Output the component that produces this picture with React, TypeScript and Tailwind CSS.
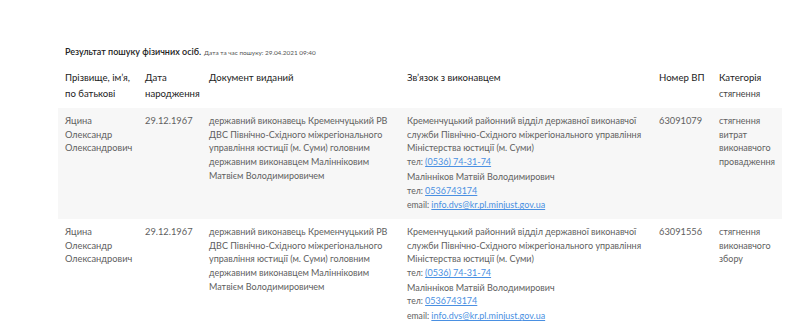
import React from "react";

const font = { fontFamily: "Lato, 'Noto Sans', sans-serif" };

type Row = {
  name: string[];
  date: string;
  doc: string[];
  cat: string[];
  num: string;
};

const docLines = [
  "державний виконавець Кременчуцький РВ",
  "ДВС Північно-Східного міжрегіонального",
  "управління юстиції (м. Суми) головним",
  "державним виконавцем Малінніковим",
  "Матвієм Володимировичем",
];

const rows: Row[] = [
  {
    name: ["Яцина", "Олександр", "Олександрович"],
    date: "29.12.1967",
    doc: docLines,
    num: "63091079",
    cat: ["стягнення", "витрат", "виконавчого", "провадження"],
  },
  {
    name: ["Яцина", "Олександр", "Олександрович"],
    date: "29.12.1967",
    doc: docLines,
    num: "63091556",
    cat: ["стягнення", "виконавчого", "збору"],
  },
];

function Lines({ lines }: { lines: string[] }) {
  return (
    <>
      {lines.map((l, i) => (
        <div key={i} className="whitespace-nowrap">
          {l}
        </div>
      ))}
    </>
  );
}

const cols = "grid grid-cols-[80px_64px_198px_252px_60px_1fr]";

export default function App() {
  return (
    <div className="w-[800px] h-[327px] bg-white overflow-hidden" style={font}>
      <div className="ml-[58px] w-[724px] pt-[45px]">
        <div className="px-[7px] h-[14px] leading-[14px] flex items-baseline whitespace-nowrap">
          <span className="text-[9px] font-semibold text-[#222]">Результат пошуку фізичних осіб.</span>
          <span className="ml-[3px] text-[6.4px] text-[#555]">Дата та час пошуку: 29.04.2021 09:40</span>
        </div>
        <div className={`${cols} px-[7px] mt-[11px] pb-[6px] text-[9.6px] leading-[16px] text-[#222]`}>
          <div>
            <div>Прізвище, ім’я,</div>
            <div>по батькові</div>
          </div>
          <div>
            <div>Дата</div>
            <div>народження</div>
          </div>
          <div>Документ виданий</div>
          <div>Зв’язок з виконавцем</div>
          <div>Номер ВП</div>
          <div>
            <div>Категорія</div>
            <div className="text-[9px] text-[#444]">стягнення</div>
          </div>
        </div>
        {rows.map((r, i) => (
          <div
            key={i}
            className={`${cols} px-[7px] py-[6px] text-[9px] leading-[13.7px] text-[#606060] ${
              i === 0 ? "bg-[#f7f7f7]" : ""
            }`}
          >
            <div className="text-[9.3px]">
              <Lines lines={r.name} />
            </div>
            <div className="text-[9.3px]">{r.date}</div>
            <div>
              <Lines lines={r.doc} />
            </div>
            <div>
              <Lines
                lines={[
                  "Кременчуцький районний відділ державної виконавчої",
                  "служби Північно-Східного міжрегіонального управління",
                  "Міністерства юстиції (м. Суми)",
                ]}
              />
              <div className="text-[8.6px] whitespace-nowrap">
                тел:{" "}
                <a href="#" className="text-[9px] text-[#4a90e2] underline">
                  (0536) 74-31-74
                </a>
              </div>
              <div className="whitespace-nowrap">Малінніков Матвій Володимирович</div>
              <div className="text-[8.6px] whitespace-nowrap">
                тел:{" "}
                <a href="#" className="text-[9px] text-[#4a90e2] underline">
                  0536743174
                </a>
              </div>
              <div className="text-[8.6px] whitespace-nowrap">
                email:{" "}
                <a href="#" className="text-[9px] text-[#4a90e2] underline">
                  info.dvs@kr.pl.minjust.gov.ua
                </a>
              </div>
            </div>
            <div className="text-[9.3px]">{r.num}</div>
            <div className="text-[9px]">
              <Lines lines={r.cat} />
            </div>
          </div>
        ))}
      </div>
    </div>
  );
}
